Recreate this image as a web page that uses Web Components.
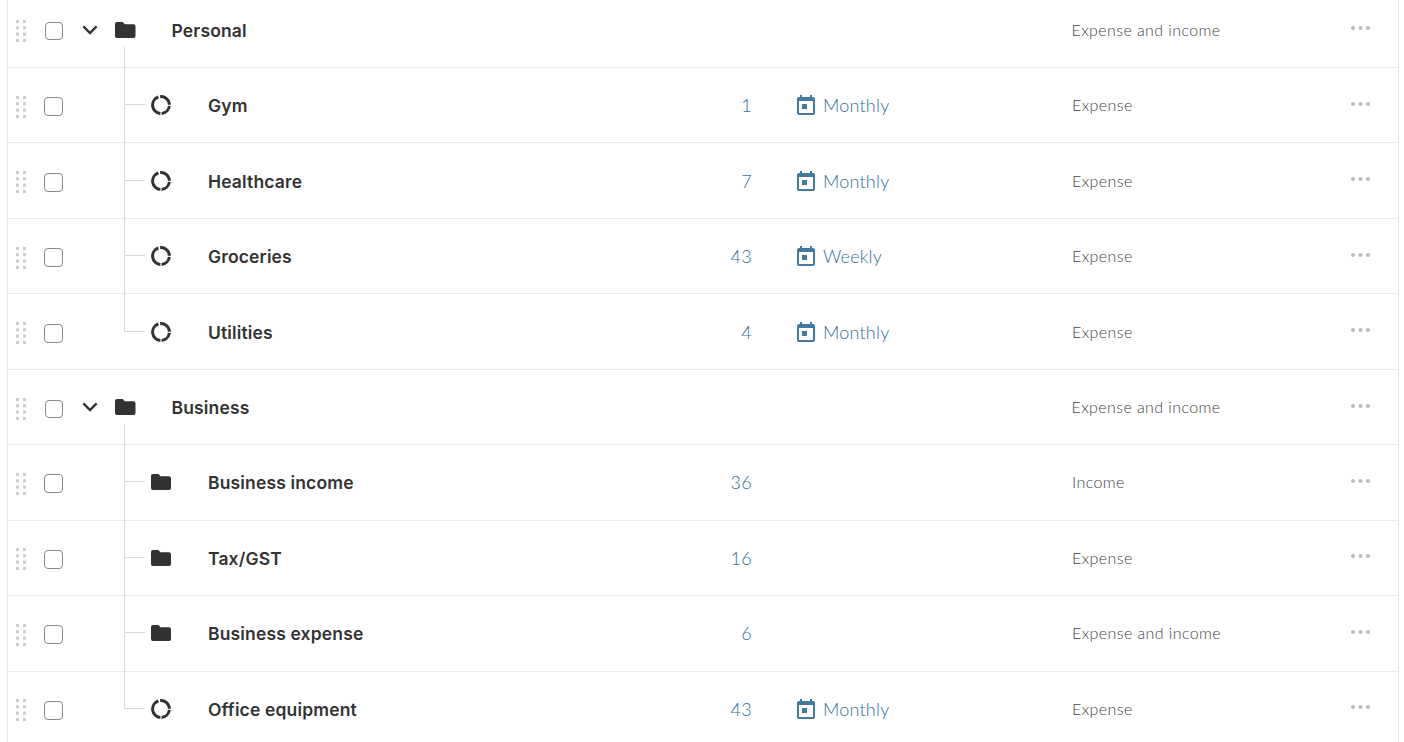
<!DOCTYPE html>
<html>
<head>
<meta charset="utf-8">
<style>
  html, body { margin: 0; height: 742px; overflow: hidden; background: #fff; }
  body { font-family: Lato, "Open Sans", sans-serif; }
</style>
</head>
<body>
<category-list>
  <category-row kind="group" icon="folder" name="Personal" type="Expense and income"></category-row>
  <category-row icon="ring" name="Gym" count="1" period="Monthly" type="Expense"></category-row>
  <category-row icon="ring" name="Healthcare" count="7" period="Monthly" type="Expense"></category-row>
  <category-row icon="ring" name="Groceries" count="43" period="Weekly" type="Expense"></category-row>
  <category-row kind="last" icon="ring" name="Utilities" count="4" period="Monthly" type="Expense"></category-row>
  <category-row kind="group" icon="folder" name="Business" type="Expense and income"></category-row>
  <category-row icon="folder" name="Business income" count="36" type="Income"></category-row>
  <category-row icon="folder" name="Tax/GST" count="16" type="Expense"></category-row>
  <category-row icon="folder" name="Business expense" count="6" type="Expense and income"></category-row>
  <category-row kind="last" icon="ring" name="Office equipment" count="43" period="Monthly" type="Expense"></category-row>
</category-list>

<script>
const ICONS = {
  folder: `<svg width="20.500" height="16" viewBox="0 0 21 16" preserveAspectRatio="none"><path fill="#333" d="M2 0h5.6a1 1 0 0 1 .8.4L10 2.2h9a2 2 0 0 1 2 2V14a2 2 0 0 1-2 2H2a2 2 0 0 1-2-2V2a2 2 0 0 1 2-2z"/></svg>`,
  ring: `<svg width="20" height="20" viewBox="0 0 20 20" fill="none" stroke="#333" stroke-width="3"><path d="M9.12 1.65A8.4 8.4 0 0 1 18.39 9.71"/><path d="M18.35 10.88A8.4 8.4 0 0 1 10.59 18.38"/><path d="M9.41 18.38A8.4 8.4 0 0 1 7.4 2.01"/></svg>`,
  chevron: `<svg width="16" height="10" viewBox="0 0 16 10" fill="none" stroke="#333" stroke-width="2.4"><path d="M1.4 1.4 8 8l6.6-6.6"/></svg>`,
  calendar: `<svg width="18" height="20" viewBox="0 0 18 20"><path fill="#41799f" d="M3 0h2v2h8V0h2v2h1a2 2 0 0 1 2 2v14a2 2 0 0 1-2 2H2a2 2 0 0 1-2-2V4a2 2 0 0 1 2-2h1zM2 6v12h14V6z"/><rect fill="#41799f" x="5" y="9" width="5" height="5"/></svg>`,
  grip: `<svg width="10" height="22" viewBox="0 0 10 22" fill="#ccc"><rect width="3" height="3"/><rect x="7" width="3" height="3"/><rect y="6.3" width="3" height="3"/><rect x="7" y="6.3" width="3" height="3"/><rect y="12.6" width="3" height="3"/><rect x="7" y="12.6" width="3" height="3"/><rect y="19" width="3" height="3"/><rect x="7" y="19" width="3" height="3"/></svg>`,
  dots: `<svg width="20" height="4" viewBox="0 0 20 4" fill="#bbb"><circle cx="2" cy="2" r="2"/><circle cx="9.500" cy="2" r="2"/><circle cx="17" cy="2" r="2"/></svg>`
};

class CategoryList extends HTMLElement {
  constructor() {
    super();
    const shadow = this.attachShadow({mode: "open"});
    shadow.innerHTML = `
      <style>
        :host {
          display: block;
          margin: -7.4px 5px 0 7px;
          border-left: 1px solid #e8e8e8;
          border-right: 1px solid #e8e8e8;
        }
      </style>
      <slot></slot>
    `;
  }
}

class CategoryRow extends HTMLElement {
  constructor() {
    super();
    this.attachShadow({mode: "open"});
  }

  connectedCallback() {
    const kind = this.getAttribute("kind") || "child";
    const group = kind === "group";
    const count = this.getAttribute("count") || "";
    const period = this.getAttribute("period");
    this.shadowRoot.innerHTML = `
      <style>
        :host {
          display: flex;
          align-items: center;
          position: relative;
          box-sizing: border-box;
          height: 75.44px;
          border-bottom: 1px solid #ebebeb;
        }
        .grip { display: flex; width: 10px; margin: 3px 0 0 8px; }
        .check {
          box-sizing: border-box;
          width: 19px;
          height: 19px;
          margin: 3px 0 0 18px;
          border: 1.5px solid #8a8a8a;
          border-radius: 4px;
        }
        .group-row-check { width: 18px; height: 18px; margin-left: 19px; }
        .toggle { display: flex; width: 16px; margin: 0 0 0 19px; }
        .icon { display: flex; }
        .group-icon { margin: 0 0 0 17px; }
        .child-icon { margin: 0 0 0 88px; width: 20px; }
        .name { font-family: Inter, Lato, sans-serif; font-size: 17.5px; font-weight: 600; letter-spacing: .15px; color: #333; white-space: nowrap; margin-top: 1px; }
        .group-name { margin-left: 36px; width: 540px; }
        .child-name { margin-left: 37px; width: 454px; }
        .count { width: 90px; text-align: right; font-size: 18px; font-weight: 300; letter-spacing: .3px; color: #2f6f9a; }
        .period { display: flex; align-items: center; gap: 8px; width: 275px; margin-left: 45px; font-size: 18px; font-weight: 300; letter-spacing: .2px; color: #2f6f9a; }
        .type { width: 279px; margin-bottom: 1px; font-size: 16px; font-weight: 300; letter-spacing: .4px; color: #444; white-space: nowrap; }
        .dots { display: flex; margin-bottom: 3px; }
        .vline { position: absolute; left: 116px; width: 1px; background: #d9d9d9; }
        .hline { position: absolute; left: 116px; top: calc(50% - 1px); width: 21px; height: 1px; background: #d9d9d9; }
      </style>
      <span class="grip">${ICONS.grip}</span>
      <span class="check ${group ? "group-row-check" : ""}"></span>
      ${group
        ? `<span class="toggle">${ICONS.chevron}</span>
           <span class="icon group-icon">${ICONS.folder}</span>
           <span class="name group-name">${this.getAttribute("name")}</span>
           <span class="vline" style="top:54px;bottom:-1px"></span>`
        : `<span class="icon child-icon">${ICONS[this.getAttribute("icon")]}</span>
           <span class="name child-name">${this.getAttribute("name")}</span>
           <span class="count">${count}</span>
           <span class="period">${period ? ICONS.calendar + `<span>${period}</span>` : ""}</span>
           <span class="vline" style="top:0;${kind === "last" ? "height:calc(50% - 1px)" : "bottom:-1px"}"></span>
           <span class="hline"></span>`}
      <span class="type">${this.getAttribute("type")}</span>
      <span class="dots">${ICONS.dots}</span>
    `;
    if (group) {
      this.shadowRoot.querySelector(".type").style.marginLeft = "360px";
    }
  }
}

customElements.define("category-list", CategoryList);
customElements.define("category-row", CategoryRow);
</script>
</body>
</html>
